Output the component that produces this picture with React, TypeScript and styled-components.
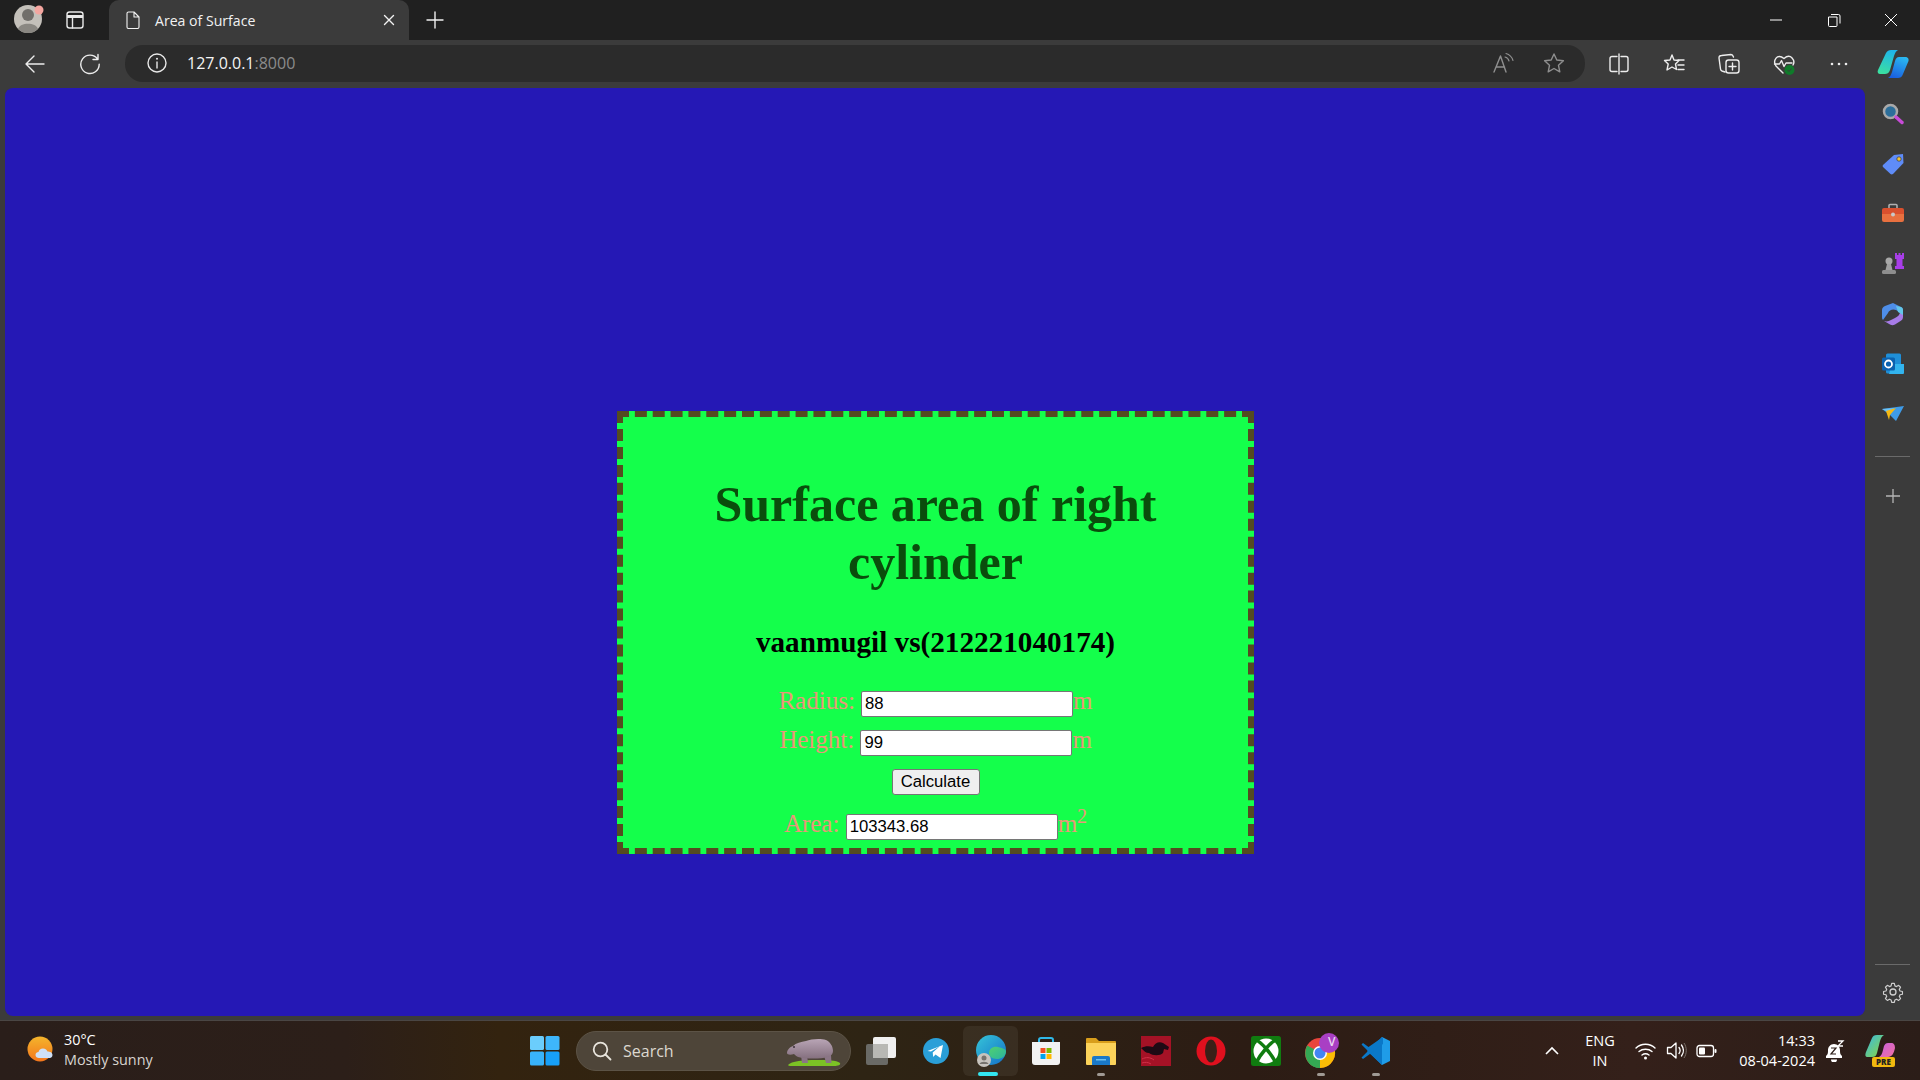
import React from "react"
import styled, {createGlobalStyle} from "styled-components"

const GlobalStyle = createGlobalStyle`
    html, body {
        margin: 0;
        padding: 0;
        width: 1920px;
        height: 1080px;
        overflow: hidden;
        background: #3b3b3b;
        font-family: "Open Sans", "Noto Sans", sans-serif;
    }
`

const Line = {fill: "none", stroke: "currentColor", strokeWidth: 1.4, strokeLinecap: "round", strokeLinejoin: "round"} as const

const Svg: React.FC<{size?: number; w?: number; h?: number; children: React.ReactNode}> = ({size = 24, w, h, children}) => (
    <svg width={w ?? size} height={h ?? size} viewBox={`0 0 ${w ?? size} ${h ?? size}`} style={{display: "block"}}>{children}</svg>
)

export default function App() {
    return (
        <Screen>
            <GlobalStyle/>
            <TabStrip>
                <ProfileSlot>
                    <Svg size={32}>
                        <circle cx="14" cy="18" r="14" fill="#c4c0ba"/>
                        <circle cx="14" cy="14" r="6" fill="#716e6a"/>
                        <path d="M4 28c2-7 18-7 20 0a14 14 0 0 1-20 0z" fill="#8a8782"/>
                        <circle cx="25" cy="9" r="4.5" fill="#f4a6a0"/>
                    </Svg>
                </ProfileSlot>
                <StripIcon>
                    <Svg size={20}>
                        <rect x="2" y="2" width="16" height="16" rx="2.5" {...Line}/>
                        <path d="M2 6.5h16" stroke="currentColor" strokeWidth="3"/>
                        <path d="M7.5 7v11" {...Line}/>
                    </Svg>
                </StripIcon>
                <Tab>
                    <Svg size={18}>
                        <path d="M3 2.5a1.500 1.500 0 0 1 1.500-1.500h5.500l5 5v10a1.500 1.500 0 0 1-1.500 1.500h-9a1.500 1.500 0 0 1-1.500-1.500zM10 1v5h5" {...Line} strokeWidth={1.1}/>
                    </Svg>
                    <TabTitle>Area of Surface</TabTitle>
                    <Svg size={12}>
                        <path d="M1.500 1.500l9 9M10.500 1.500l-9 9" {...Line}/>
                    </Svg>
                </Tab>
                <NewTab>
                    <Svg size={18}>
                        <path d="M9 1v16M1 9h16" {...Line}/>
                    </Svg>
                </NewTab>
                <WindowControls>
                    <Svg size={14}><path d="M1 7h12" stroke="#fff" strokeWidth="1"/></Svg>
                    <Svg size={14}><path d="M1.500 4h8.500v8.500a1 1 0 0 1-1 1h-6.500a1 1 0 0 1-1-1zM4 1.500h7.500a1.500 1.500 0 0 1 1.500 1.500v7.500" fill="none" stroke="#fff" strokeWidth="1"/></Svg>
                    <Svg size={14}><path d="M1 1l12 12M13 1l-12 12" stroke="#fff" strokeWidth="1"/></Svg>
                </WindowControls>
            </TabStrip>

            <Toolbar>
                <ToolIcon $first>
                    <Svg size={22}>
                        <path d="M20 11H2M10 3l-8 8 8 8" {...Line}/>
                    </Svg>
                </ToolIcon>
                <ToolIcon>
                    <Svg size={22}>
                        <path d="M18.500 6a9.200 9.200 0 1 0 1.700 5.300M19 1.500v5h-5" {...Line}/>
                    </Svg>
                </ToolIcon>
                <AddressBar>
                    <Svg size={20}>
                        <circle cx="10" cy="10" r="9" {...Line}/>
                        <path d="M10 9v6" {...Line}/>
                        <circle cx="10" cy="5.800" r="1" fill="currentColor"/>
                    </Svg>
                    <Url>127.0.0.1<Port>:8000</Port></Url>
                    <AddressActions>
                        <Svg size={22}>
                            <path d="M1 20L7.500 4 13 20M3.500 15h8" {...Line}/>
                            <path d="M12 5c2 .5 3.500 2 4 4M13 1.500c3.500 1 6 3.500 7 7" {...Line} strokeWidth={1.1}/>
                        </Svg>
                        <Svg size={22}>
                            <path d="M11 2l2.800 6 6.600.8-4.900 4.500 1.300 6.500-5.800-3.300-5.800 3.300 1.300-6.500-4.900-4.500 6.600-.8z" {...Line}/>
                        </Svg>
                    </AddressActions>
                </AddressBar>
                <ToolGroup>
                    <Svg size={22}>
                        <path d="M9 3.500H4a2 2 0 0 0-2 2v11a2 2 0 0 0 2 2h5M13 3.500h5a2 2 0 0 1 2 2v11a2 2 0 0 1-2 2h-5M11 1v20" {...Line}/>
                    </Svg>
                    <Svg size={22}>
                        <path d="M9 2l2 5 5 .5-3.500 3.500 1 5.500-4.500-2.500-5 3 1.200-6L1.500 7.500 7 7z" {...Line}/>
                        <path d="M15 7h6M15 12h6M15 16.500h6" {...Line}/>
                    </Svg>
                    <Svg size={22}>
                        <path d="M7 19l-3-1c-1-.4-1.500-1-1.500-2L1 5c0-1.500 1-2.500 2.500-2.500L13 1.500c1.500 0 2 1 2.500 2.500" {...Line}/>
                        <rect x="8" y="7" width="13" height="13" rx="2.500" {...Line}/>
                        <path d="M14.500 10v7M11 13.500h7" {...Line}/>
                    </Svg>
                    <Svg size={22}>
                        <path d="M10 20L3 13C-.5 8 4-.5 11 5.500 18-.5 22.500 8 20 12" {...Line}/>
                        <path d="M1.500 11h5l2-3.500 2.500 6 2-3.500h6" {...Line}/>
                        <circle cx="16.500" cy="17" r="5" fill="#0f7b2a"/>
                        <path d="M14.500 17l1.500 1.500 2.500-3" fill="none" stroke="#3b3b3b" strokeWidth="1"/>
                    </Svg>
                    <Svg size={22}>
                        <circle cx="4" cy="11" r="1.300" fill="currentColor"/>
                        <circle cx="11" cy="11" r="1.300" fill="currentColor"/>
                        <circle cx="18" cy="11" r="1.300" fill="currentColor"/>
                    </Svg>
                </ToolGroup>
                <CopilotSlot>
                    <Svg w={32} h={28}>
                        <defs>
                            <linearGradient id="copA" x1="0.600" y1="0" x2="0.300" y2="1">
                                <stop offset="0" stopColor="#1fb4ea"/>
                                <stop offset="1" stopColor="#3be0a0"/>
                            </linearGradient>
                            <linearGradient id="copB" x1="0.700" y1="0" x2="0.300" y2="1">
                                <stop offset="0" stopColor="#2ab8f0"/>
                                <stop offset="1" stopColor="#1a5fe0"/>
                            </linearGradient>
                        </defs>
                        <path d="M9 3c1-2 3-3 5-3h7c-2 1-3 3-4 6l-4 14c-1 3-3 4-5 4H3c-2 0-3-2-2-4z" fill="url(#copA)"/>
                        <path d="M22 7h6c3 0 4 2 3.500 4L26 24c-1 3-3 4-5 4H11c2-1 3-3 4-6l3-11c1-3 2-4 4-4z" fill="url(#copB)"/>
                    </Svg>
                </CopilotSlot>
            </Toolbar>

            <Middle>
                <Viewport>
                    <Card>
                        <Heading>Surface area of right cylinder</Heading>
                        <SubHeading>vaanmugil vs(212221040174)</SubHeading>
                        <Row>
                            <Label>Radius:</Label> <Field value="88" readOnly/><Label>m</Label>
                        </Row>
                        <Row>
                            <Label>Height:</Label> <Field value="99" readOnly/><Label>m</Label>
                        </Row>
                        <ButtonRow>
                            <CalcButton>Calculate</CalcButton>
                        </ButtonRow>
                        <AreaRow>
                            <Label>Area:</Label> <Field value="103343.68" readOnly/><Label>m<sup>2</sup></Label>
                        </AreaRow>
                    </Card>
                </Viewport>
                <SideBar>
                    <SideIcons>
                        <SideIcon>
                            <Svg size={24}>
                                <circle cx="9.500" cy="9.500" r="6.500" fill="#2c6e9a" stroke="#a9a9a9" strokeWidth="2.500"/>
                                <path d="M15 15l6 5.500" stroke="#c84bd8" strokeWidth="3.500" strokeLinecap="round"/>
                            </Svg>
                        </SideIcon>
                        <SideIcon>
                            <Svg size={24}>
                                <path d="M2 13L13 3l9-1 .5 9L12 22c-1 .5-1.500.5-2.500 0L2 15c-.5-.5-.5-1.500 0-2z" fill="#5f8cf8"/>
                                <circle cx="18" cy="7" r="2.200" fill="#f4c430" stroke="#33405c" strokeWidth=".8"/>
                            </Svg>
                        </SideIcon>
                        <SideIcon>
                            <Svg size={24}>
                                <path d="M8 6V3.500a1 1 0 0 1 1-1h6a1 1 0 0 1 1 1V6" fill="none" stroke="#b0b0b0" strokeWidth="1.600"/>
                                <path d="M1 8a2 2 0 0 1 2-2h18a2 2 0 0 1 2 2v4H1z" fill="#d9502e"/>
                                <path d="M1 12h22v6a2 2 0 0 1-2 2H3a2 2 0 0 1-2-2z" fill="#e8703f"/>
                                <circle cx="12" cy="12.500" r="2" fill="#c9c9c9"/>
                            </Svg>
                        </SideIcon>
                        <SideIcon>
                            <Svg size={24}>
                                <circle cx="8" cy="9" r="3.500" fill="#a8a8a8"/>
                                <path d="M6 12h4l1.500 6h-7z" fill="#a0a0a0"/>
                                <rect x="1" y="18" width="14" height="4" rx="1.500" fill="#8e8e8e"/>
                                <path d="M14 1h2v2h1.500V1h2v2H21V1h2v6h-1.500v7h1.500v3h-9v-3h1.500V7H14z" fill="#a83ee8"/>
                            </Svg>
                        </SideIcon>
                        <SideIcon>
                            <Svg size={24}>
                                <path d="M12 1l8 4c2 1 2 2 2 4v3l-7-4c-3-1.500-7 0-8 3l-5 7C1 17 1 16 1 14V8c0-2 1-3 3-4z" fill="#4e8ee8"/>
                                <path d="M22 9v6c0 2-1 3-2.500 4L14 22.500c-2 1-3 1-5 0L3 19c3 1 5 0 7-1l4-2c3-1.500 5-3.500 5-6z" fill="#a77ce8"/>
                                <path d="M20 5c2 1 2 2 2 4v4l-5-3-2-6z" fill="#63c7e8"/>
                            </Svg>
                        </SideIcon>
                        <SideIcon>
                            <Svg size={24}>
                                <rect x="5" y="1.500" width="15" height="20" rx="1.500" fill="#1f8fd8"/>
                                <path d="M11 12h12v9a1 1 0 0 1-1 1H8z" fill="#32b4ee"/>
                                <rect x="1" y="5.500" width="13" height="13" rx="1.500" fill="#0b62b0"/>
                                <circle cx="7.500" cy="12" r="3.500" fill="none" stroke="#fff" strokeWidth="1.800"/>
                            </Svg>
                        </SideIcon>
                        <SideIcon>
                            <Svg size={24}>
                                <path d="M1 7l22-3-8 15-6-6z" fill="#3e9be8"/>
                                <path d="M1 7l13-1-7 4z" fill="#6ec3f4"/>
                                <path d="M5 9l10-3-6 7-1 5z" fill="#f5b912"/>
                            </Svg>
                        </SideIcon>
                    </SideIcons>
                    <SideDivider/>
                    <SidePlus>
                        <Svg size={16}>
                            <path d="M8 1v14M1 8h14" fill="none" stroke="#b5b5b5" strokeWidth="1.300"/>
                        </Svg>
                    </SidePlus>
                    <SideFooter>
                        <SideDivider/>
                        <SideGear>
                            <Svg size={22}>
                                <path d="M9.500 1.500h3l.6 2.700 1.800.8 2.400-1.400 2.100 2.100-1.400 2.400.8 1.800 2.700.6v3l-2.700.6-.8 1.800 1.400 2.400-2.100 2.100-2.400-1.400-1.800.8-.6 2.700h-3l-.6-2.700-1.800-.8-2.400 1.400-2.100-2.100 1.400-2.400-.8-1.800-2.700-.6v-3l2.700-.6.8-1.800-1.400-2.400 2.100-2.100 2.400 1.400 1.800-.8z" fill="none" stroke="#cfcfcf" strokeWidth="1.300" strokeLinejoin="round" transform="translate(1.100 1.100) scale(.9)"/>
                                <circle cx="11" cy="11" r="3" fill="none" stroke="#cfcfcf" strokeWidth="1.300"/>
                            </Svg>
                        </SideGear>
                    </SideFooter>
                </SideBar>
            </Middle>

            <Taskbar>
                <Weather>
                    <Svg size={30}>
                        <defs>
                            <linearGradient id="sun" x1="0" y1="0" x2="0" y2="1">
                                <stop offset="0" stopColor="#f4b52c"/>
                                <stop offset="1" stopColor="#f4761c"/>
                            </linearGradient>
                        </defs>
                        <circle cx="13" cy="13" r="12.500" fill="url(#sun)"/>
                        <path d="M12 22c-2 0-3.500-1-3.500-3s1.500-3 3-3c.5-2 2-3.500 4.500-3.500s4 1.500 4.500 3c2.500 0 5 1 5 3.500s-2 3-4 3z" fill="#cfe0f6"/>
                    </Svg>
                    <WeatherText>
                        <Temp>30°C</Temp>
                        <Forecast>Mostly sunny</Forecast>
                    </WeatherText>
                </Weather>
                <TaskSlot>
                    <Svg size={30}>
                        <rect x="0" y="0" width="14" height="14" rx="1.500" fill="#6bcdfc"/>
                        <rect x="15.500" y="0" width="14" height="14" rx="1.500" fill="#3eb6fb"/>
                        <rect x="0" y="15.500" width="14" height="14" rx="1.500" fill="#39b3fb"/>
                        <rect x="15.500" y="15.500" width="14" height="14" rx="1.500" fill="#17a0f8"/>
                    </Svg>
                </TaskSlot>
                <SearchPill>
                    <Svg size={20}>
                        <circle cx="8.500" cy="8.500" r="6.800" fill="none" stroke="#e8e4dc" strokeWidth="1.800"/>
                        <path d="M13.500 13.500l5 5" stroke="#e8e4dc" strokeWidth="1.800" strokeLinecap="round"/>
                    </Svg>
                    <SearchText>Search</SearchText>
                    <Svg w={56} h={32}>
                        <defs>
                            <linearGradient id="hippo" x1="0" y1="0" x2="0" y2="1">
                                <stop offset="0" stopColor="#b9a5b6"/>
                                <stop offset="1" stopColor="#85707f"/>
                            </linearGradient>
                        </defs>
                        <path d="M2 30c3-4 16-5 28-5s20 0 24 3c1 2-2 3-6 3H8c-3 0-6 0-6-1z" fill="#7cc225"/>
                        <path d="M16 28l-1-8h6l1 8zM40 28l-2-8h7l.5 8z" fill="#8b7686"/>
                        <path d="M1 18c0-3 3-6 6-7 3-3 8-4 13-5 5-2 14-3 20-1 4 2 7 6 7 11 0 3-2 5-5 6-8 2-22 2-30 0-2-1-3-2-4-3-3 1-7 1-7-1z" fill="url(#hippo)"/>
                        <circle cx="8" cy="12" r="1" fill="#3d2f38"/>
                    </Svg>
                </SearchPill>
                <TaskSlot>
                    <Svg size={32}>
                        <rect x="1" y="9" width="22" height="21" rx="2" fill="#6a6a66"/>
                        <rect x="8" y="2" width="23" height="21" rx="2" fill="#f0f0f0"/>
                        <rect x="8" y="9" width="15" height="14" fill="#b8b8b4"/>
                    </Svg>
                </TaskSlot>
                <TaskSlot>
                    <Svg size={26}>
                        <circle cx="13" cy="13" r="13" fill="#2a9fd8"/>
                        <path d="M4.500 13L20 7l-2.500 13-5-3.500-2.300 2.500-.5-4.500 7.300-6.500-9 5.500z" fill="#fff"/>
                    </Svg>
                </TaskSlot>
                <ActiveSlot>
                    <Svg size={32}>
                        <defs>
                            <linearGradient id="edgeA" x1="0" y1="0" x2="1" y2="1">
                                <stop offset="0" stopColor="#36c5d8"/>
                                <stop offset="1" stopColor="#1470c8"/>
                            </linearGradient>
                            <linearGradient id="edgeB" x1="0" y1="0" x2="1" y2="1">
                                <stop offset="0" stopColor="#50d070"/>
                                <stop offset="1" stopColor="#2ab4a0"/>
                            </linearGradient>
                        </defs>
                        <circle cx="16" cy="15" r="15" fill="url(#edgeA)"/>
                        <path d="M31 16c0 6-5 8-9 8-5 0-8-3-8-6 0-4 4-7 9-6s7 2 8 4z" fill="url(#edgeB)"/>
                        <circle cx="9" cy="25" r="7" fill="#c8c4be"/>
                        <circle cx="9" cy="23" r="2.500" fill="#77736e"/>
                        <path d="M4.500 29c1-3 8-3 9 0z" fill="#77736e"/>
                    </Svg>
                    <ActivePip/>
                </ActiveSlot>
                <TaskSlot>
                    <Svg size={30}>
                        <path d="M8 7V4a2 2 0 0 1 2-2h10a2 2 0 0 1 2 2v3" fill="none" stroke="#2fb8e8" strokeWidth="2"/>
                        <path d="M1 6h28v20a3 3 0 0 1-3 3H4a3 3 0 0 1-3-3z" fill="#f2f2f2"/>
                        <rect x="9.500" y="12" width="5" height="5" fill="#f25022"/>
                        <rect x="15.500" y="12" width="5" height="5" fill="#7fba00"/>
                        <rect x="9.500" y="18" width="5" height="5" fill="#00a4ef"/>
                        <rect x="15.500" y="18" width="5" height="5" fill="#ffb900"/>
                    </Svg>
                </TaskSlot>
                <TaskSlot $running>
                    <Svg size={30}>
                        <path d="M0 3a1 1 0 0 1 1-1h9l3 3h16a1 1 0 0 1 1 1v4H0z" fill="#d89e1c"/>
                        <path d="M0 7h30v21a1 1 0 0 1-1 1H1a1 1 0 0 1-1-1z" fill="#fbd25a"/>
                        <path d="M6 22a2 2 0 0 1 2-2h14a2 2 0 0 1 2 2v7H6z" fill="#1a78c8"/>
                        <rect x="10" y="23" width="10" height="1.500" fill="#6cc0f0"/>
                    </Svg>
                </TaskSlot>
                <TaskSlot>
                    <Svg size={30}>
                        <rect width="30" height="30" fill="#a51226"/>
                        <path d="M0 12c4-2 8-2 12-1 2-4 6-6 10-4l6 4-1 3-4-1-1 4c-3 3-10 3-14 0-3 0-5-2-8-5z" fill="#1d0a14"/>
                        <path d="M1 23c4-2 8-2 12 1M1 27c3-1 6-1 9 1" fill="none" stroke="#d03048" strokeWidth="1"/>
                    </Svg>
                </TaskSlot>
                <TaskSlot>
                    <Svg size={30}>
                        <circle cx="15" cy="15" r="14.500" fill="#e0101e"/>
                        <ellipse cx="15" cy="15" rx="6" ry="11.500" fill="#3a2018"/>
                    </Svg>
                </TaskSlot>
                <TaskSlot>
                    <Svg size={30}>
                        <rect width="30" height="30" rx="2.500" fill="#107c10"/>
                        <circle cx="15" cy="15" r="12.500" fill="#fff"/>
                        <path d="M5 4C10 6 20 17 25 27M25 4C20 6 10 17 5 27" fill="none" stroke="#107c10" strokeWidth="3.500"/>
                    </Svg>
                </TaskSlot>
                <TaskSlot $running>
                    <Svg w={36} h={36}>
                        <circle cx="17" cy="20" r="15" fill="#e8453c"/>
                        <path d="M17 20L4.200 27.500A15 15 0 0 0 17 35z" fill="#34a853"/>
                        <path d="M4.200 12.500A15 15 0 0 0 17 35l7-12z" fill="#34a853"/>
                        <path d="M17 35a15 15 0 0 0 13-22.500H17z" fill="#fbbc05"/>
                        <circle cx="17" cy="20" r="7" fill="#fff"/>
                        <circle cx="17" cy="20" r="5.500" fill="#4285f4"/>
                        <circle cx="26" cy="10" r="10" fill="#a93fc4"/>
                    </Svg>
                    <ProfileLetter>V</ProfileLetter>
                </TaskSlot>
                <TaskSlot $running>
                    <Svg size={30}>
                        <path d="M21 1l8 4v20l-8 4-12-12z" fill="#1f9ce8"/>
                        <path d="M21 1v28L6 15z" fill="#0a78c8"/>
                        <path d="M22 1v7L7.500 19 2 23l-1.500-1.500 6.500-6.500-6.500-6.500L2 7l5.500 4z" fill="#0a78c8"/>
                    </Svg>
                </TaskSlot>
                <Tray>
                    <TrayChevron>
                        <Svg w={16} h={10}>
                            <path d="M2 8l6-6 6 6" fill="none" stroke="#fff" strokeWidth="1.600"/>
                        </Svg>
                    </TrayChevron>
                    <LangBlock>ENG<br/>IN</LangBlock>
                    <TrayIcons>
                        <Svg size={21}>
                            <path d="M1 8c5-5 14-5 19 0M4 11.500c3.500-3 9.500-3 13 0M7 15c2-1.500 5-1.500 7 0" fill="none" stroke="#fff" strokeWidth="1.400" strokeLinecap="round"/>
                            <circle cx="10.500" cy="18" r="1.500" fill="#fff"/>
                        </Svg>
                        <Svg size={21}>
                            <path d="M1.500 7.500h3.500l5-4.500v15l-5-4.500H1.500z" fill="none" stroke="#fff" strokeWidth="1.300" strokeLinejoin="round"/>
                            <path d="M13 7.500c1.500 2 1.500 4 0 6M15.500 5c2.500 3.500 2.500 7.500 0 11" fill="none" stroke="#fff" strokeWidth="1.300" strokeLinecap="round"/>
                            <path d="M18 3c3 4.500 3 10.500 0 15" fill="none" stroke="#7a716a" strokeWidth="1"/>
                        </Svg>
                        <Svg w={21} h={14}>
                            <rect x="1" y="1.500" width="16.500" height="11" rx="2.500" fill="none" stroke="#fff" strokeWidth="1.300"/>
                            <rect x="3" y="3.500" width="6" height="7" rx="1" fill="#fff"/>
                            <rect x="18.500" y="5" width="2" height="4" rx="1" fill="#fff"/>
                        </Svg>
                    </TrayIcons>
                    <Clock>
                        <span>14:33</span>
                        <span>08-04-2024</span>
                    </Clock>
                    <BellSlot>
                        <Svg size={22}>
                            <path d="M3 16c2-1.500 2-3 2-6 0-3 2.500-6 6-6s6 3 6 6c0 3 0 4.500 2 6v2H3z" fill="#fff"/>
                            <path d="M8 19.500a3 3 0 0 0 6 0z" fill="#fff"/>
                            <path d="M8 8h5l-5 6h5" fill="none" stroke="#2c1d18" strokeWidth="1.200"/>
                            <path d="M15 1h5l-5 5h5" fill="none" stroke="#fff" strokeWidth="1.300"/>
                        </Svg>
                    </BellSlot>
                    <PreSlot>
                        <Svg w={30} h={26}>
                            <defs>
                                <linearGradient id="preA" x1="0" y1="0" x2="1" y2="1">
                                    <stop offset="0" stopColor="#38b8e8"/>
                                    <stop offset="1" stopColor="#8cd838"/>
                                </linearGradient>
                                <linearGradient id="preB" x1="0" y1="0" x2="1" y2="1">
                                    <stop offset="0" stopColor="#c860e0"/>
                                    <stop offset="1" stopColor="#f070a0"/>
                                </linearGradient>
                            </defs>
                            <path d="M7 3c1-2 2-3 5-3h7c-2 1-3 3-4 6l-3 12c-1 3-2 4-5 4H3c-3 0-3-2-2-5z" fill="url(#preA)"/>
                            <path d="M14 22c2-1 3-3 4-7l1-4c1-2 2-3 4-3h3c3 0 4 2 4 5-1 5-3 9-7 9z" fill="url(#preB)"/>
                        </Svg>
                        <PreBadge>PRE</PreBadge>
                    </PreSlot>
                </Tray>
            </Taskbar>
        </Screen>
    )
}

const Screen = styled.div`
    width: 1920px;
    height: 1080px;
    display: flex;
    flex-direction: column;
    background: #3b3b3b;
    color: #f0f0f0;
    overflow: hidden;
`

const TabStrip = styled.div`
    height: 40px;
    flex: none;
    display: flex;
    align-items: center;
    background: #202020;
`

const ProfileSlot = styled.div`
    width: 56px;
    padding-left: 14px;
    box-sizing: border-box;
    margin-top: -6px;
`

const StripIcon = styled.div`
    width: 53px;
    padding-left: 9px;
    box-sizing: border-box;
    color: #e8e8e8;
`

const Tab = styled.div`
    width: 300px;
    height: 40px;
    box-sizing: border-box;
    padding: 0 14px 0 15px;
    display: flex;
    align-items: center;
    background: #3b3b3b;
    border-radius: 10px 10px 0 0;
    color: #f2f2f2;
`

const TabTitle = styled.span`
    flex: 1;
    margin-left: 13px;
    font-size: 14.100px;
    color: #f2f2f2;
`

const NewTab = styled.div`
    margin-left: 17px;
    color: #f0f0f0;
`

const WindowControls = styled.div`
    margin-left: auto;
    width: 151px;
    padding-right: 22px;
    box-sizing: border-box;
    display: flex;
    justify-content: space-between;
`

const Toolbar = styled.div`
    height: 48px;
    flex: none;
    display: flex;
    align-items: center;
    background: #3b3b3b;
    color: #ededed;
`

const ToolIcon = styled.div<{$first?: boolean}>`
    width: 22px;
    margin-left: ${p => (p.$first ? "24px" : "33px")};
`

const AddressBar = styled.div`
    margin-left: 24px;
    width: 1460px;
    height: 37px;
    margin-top: -2px;
    box-sizing: border-box;
    padding: 0 15px 0 22px;
    display: flex;
    align-items: center;
    background: #2b2b2b;
    border-radius: 18px;
    color: #e8e8e8;
`

const Url = styled.span`
    margin-left: 20px;
    font-family: "Open Sans", sans-serif;
    font-size: 16px;
    color: #f4f4f4;
`

const Port = styled.span`
    color: #8c8c8c;
`

const AddressActions = styled.div`
    margin-left: auto;
    width: 77px;
    display: flex;
    justify-content: space-between;
    color: #8f8f8f;
    padding-right: 5px;
    box-sizing: border-box;
`

const ToolGroup = styled.div`
    margin-left: 23px;
    width: 242px;
    display: flex;
    justify-content: space-between;
`

const CopilotSlot = styled.div`
    margin-left: 27px;
`

const Middle = styled.div`
    flex: none;
    height: 932px;
    display: flex;
`

const Viewport = styled.div`
    width: 1860px;
    height: 928px;
    margin-left: 5px;
    box-sizing: border-box;
    padding: 323px 0 0 1px;
    background: #2518b5;
    border-radius: 8px;
`

const Card = styled.div`
    width: 637px;
    height: 443px;
    margin: 0 auto;
    box-sizing: border-box;
    border: 6px dashed #544b20;
    background: #14ff4b;
    text-align: center;
    font-family: "Liberation Serif", "Times New Roman", serif;
`

const Heading = styled.h1`
    margin: 58px 40px 0;
    font-size: 50px;
    line-height: 58px;
    font-weight: bold;
    color: #0a4d0c;
`

const SubHeading = styled.h2`
    margin: 34px 0 22px;
    font-size: 29.200px;
    line-height: 34px;
    font-weight: bold;
    color: #000;
`

const Row = styled.div`
    height: 39px;
    line-height: 39px;
    font-size: 25px;
`

const AreaRow = styled(Row)`
    margin-top: 6px;
`

const ButtonRow = styled.div`
    height: 39px;
    box-sizing: border-box;
    padding-top: 10px;
    display: flex;
    justify-content: center;
    align-items: flex-start;
`

const Label = styled.span`
    color: #e9967a;
    sup {
        font-size: 20px;
        line-height: 0;
    }
`

const Field = styled.input`
    width: 212px;
    height: 26px;
    box-sizing: border-box;
    padding: 1px 3px;
    border: 1px solid #767676;
    border-radius: 2px;
    background: #fff;
    color: #000;
    font-family: "Liberation Sans", Arial, sans-serif;
    font-size: 16.700px;
`

const CalcButton = styled.button`
    width: 88px;
    height: 26px;
    padding: 0;
    border: 1px solid #767676;
    border-radius: 3px;
    background: #efefef;
    color: #000;
    font-family: "Liberation Sans", Arial, sans-serif;
    font-size: 16.700px;
`

const SideBar = styled.div`
    width: 55px;
    display: flex;
    flex-direction: column;
    align-items: center;
    height: 928px;
`

const SideIcons = styled.div`
    margin-top: 14px;
    display: flex;
    flex-direction: column;
    gap: 26px;
`

const SideIcon = styled.div`
    width: 24px;
    height: 24px;
`

const SideDivider = styled.div`
    width: 35px;
    height: 1px;
    background: #6a6a6a;
    margin-top: 30px;
`

const SidePlus = styled.div`
    margin-top: 31px;
`

const SideFooter = styled.div`
    margin-top: auto;
    display: flex;
    flex-direction: column;
    align-items: center;
`

const SideGear = styled.div`
    margin: 16px 0 13px;
`

const Taskbar = styled.div`
    flex: 1;
    display: flex;
    align-items: center;
    border-top: 1px solid #4a4644;
    margin-top: 0;
    background: linear-gradient(90deg, #2a1e1a 0%, #2c1f19 18%, #33230f 26%, #2e2414 45%, #2c1c14 65%, #34201a 85%, #2b1d18 100%);
`

const Weather = styled.div`
    width: 517px;
    box-sizing: border-box;
    padding-left: 27px;
    display: flex;
    align-items: center;
    gap: 7px;
`

const WeatherText = styled.div`
    display: flex;
    flex-direction: column;
    margin-top: -2px;
`

const Temp = styled.span`
    font-size: 14.400px;
    line-height: 20px;
    color: #fff;
`

const Forecast = styled.span`
    font-size: 14.400px;
    line-height: 20px;
    color: #d8d4d0;
`

const TaskSlot = styled.div<{$running?: boolean}>`
    position: relative;
    width: 55px;
    height: 50px;
    flex: none;
    display: flex;
    align-items: center;
    justify-content: center;
    ${p => p.$running && `
        &::after {
            content: "";
            position: absolute;
            left: 24px;
            bottom: 0;
            width: 8px;
            height: 3px;
            border-radius: 2px;
            background: #a09a94;
        }
    `}
`

const ActiveSlot = styled(TaskSlot)`
    background: rgba(255, 255, 255, 0.06);
    border-radius: 6px;
    height: 50px;
`

const ActivePip = styled.div`
    position: absolute;
    left: 15px;
    bottom: 0;
    width: 20px;
    height: 4px;
    border-radius: 2px;
    background: #33e6f0;
`

const ProfileLetter = styled.span`
    position: absolute;
    top: 7px;
    left: 35px;
    font-size: 12px;
    font-weight: 600;
    color: #ead6f0;
`

const SearchPill = styled.div`
    width: 275px;
    height: 40px;
    flex: none;
    margin-left: 4px;
    margin-right: 2px;
    box-sizing: border-box;
    padding: 0 8px 0 15px;
    display: flex;
    align-items: center;
    border-radius: 20px;
    background: #4e4539;
    border: 1px solid #5c5346;
`

const SearchText = styled.span`
    flex: 1;
    margin-left: 11px;
    font-size: 16px;
    color: #dcd8d0;
`

const Tray = styled.div`
    margin-left: auto;
    display: flex;
    align-items: center;
    color: #fff;
`

const TrayChevron = styled.div`
    margin-right: 20px;
`

const LangBlock = styled.div`
    font-size: 14.500px;
    line-height: 20px;
    text-align: center;
    width: 40px;
`

const TrayIcons = styled.div`
    margin-left: 15px;
    width: 82px;
    display: flex;
    align-items: center;
    justify-content: space-between;
`

const Clock = styled.div`
    width: 98px;
    display: flex;
    flex-direction: column;
    align-items: flex-end;
    font-size: 14.500px;
    line-height: 20px;
`

const BellSlot = styled.div`
    margin-left: 8px;
`

const PreSlot = styled.div`
    position: relative;
    margin-left: 20px;
    margin-right: 25px;
    width: 30px;
    height: 32px;
`

const PreBadge = styled.span`
    position: absolute;
    left: 7px;
    bottom: 0;
    width: 23px;
    height: 10px;
    border-radius: 2px;
    background: #f2b90f;
    color: #222;
    font-size: 8px;
    font-weight: 800;
    line-height: 10px;
    text-align: center;
`
